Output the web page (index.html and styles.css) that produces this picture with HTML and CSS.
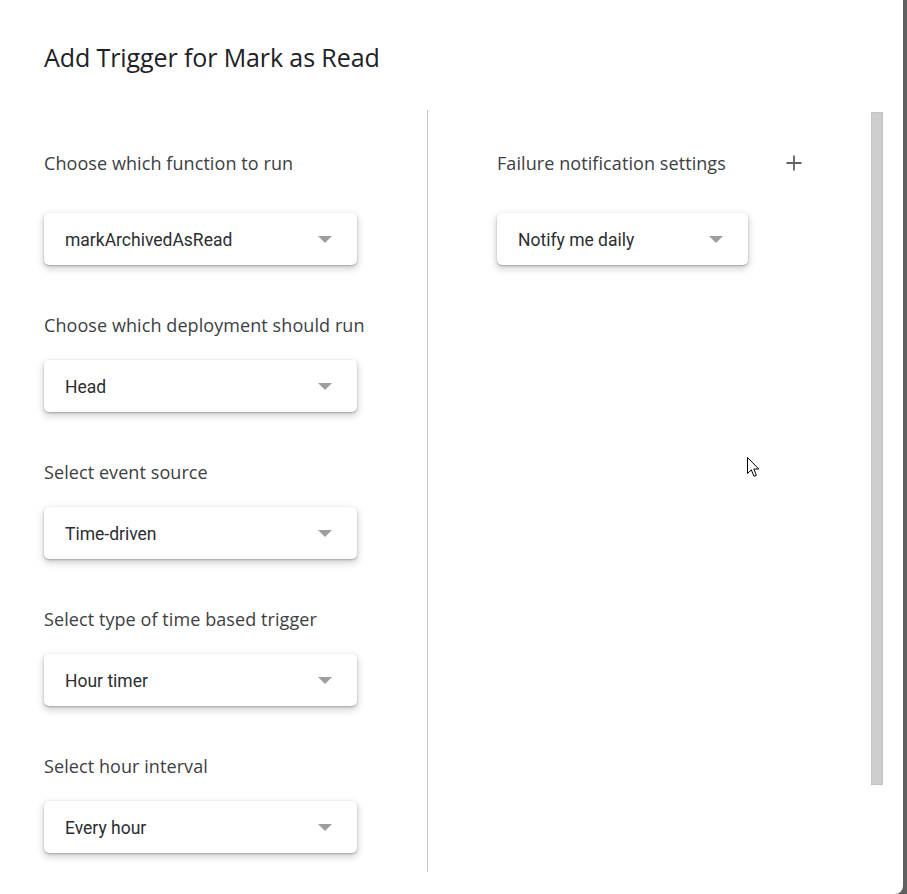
FILE: index.html
```html
<!DOCTYPE html>
<html>
<head>
<meta charset="utf-8">
<link rel="stylesheet" href="styles.css">
</head>
<body>
<div class="dialog">
  <h1 class="title">Add Trigger for Mark as Read</h1>
  <div class="body">
    <div class="col left">
      <div class="field first">
        <div class="label">Choose which function to run</div>
        <div class="select"><span class="value">markArchivedAsRead</span><svg class="arrow" width="14" height="7" viewBox="0 0 14 7"><polygon points="0,0 14,0 7,7" fill="#9e9e9e"/></svg></div>
      </div>
      <div class="field">
        <div class="label">Choose which deployment should run</div>
        <div class="select"><span class="value">Head</span><svg class="arrow" width="14" height="7" viewBox="0 0 14 7"><polygon points="0,0 14,0 7,7" fill="#9e9e9e"/></svg></div>
      </div>
      <div class="field">
        <div class="label">Select event source</div>
        <div class="select"><span class="value">Time-driven</span><svg class="arrow" width="14" height="7" viewBox="0 0 14 7"><polygon points="0,0 14,0 7,7" fill="#9e9e9e"/></svg></div>
      </div>
      <div class="field">
        <div class="label">Select type of time based trigger</div>
        <div class="select"><span class="value">Hour timer</span><svg class="arrow" width="14" height="7" viewBox="0 0 14 7"><polygon points="0,0 14,0 7,7" fill="#9e9e9e"/></svg></div>
      </div>
      <div class="field">
        <div class="label">Select hour interval</div>
        <div class="select"><span class="value">Every hour</span><svg class="arrow" width="14" height="7" viewBox="0 0 14 7"><polygon points="0,0 14,0 7,7" fill="#9e9e9e"/></svg></div>
      </div>
    </div>
    <div class="divider"></div>
    <div class="col right">
      <div class="field first">
        <div class="label-row">
          <span class="row-text">Failure notification settings</span>
          <svg class="plus" width="16" height="16" viewBox="0 0 16 16"><path d="M8 0.5v15M0.5 8h15" stroke="#5f6368" stroke-width="1.8" fill="none"/></svg>
        </div>
        <div class="select narrow"><span class="value">Notify me daily</span><svg class="arrow" width="14" height="7" viewBox="0 0 14 7"><polygon points="0,0 14,0 7,7" fill="#9e9e9e"/></svg></div>
      </div>
    </div>
    <div class="scroll"><div class="thumb"></div></div>
  </div>
  <svg class="cursor" width="14" height="21" viewBox="0 0 14 21"><path d="M0.5 0.5 L0.5 16.5 L4.3 12.9 L7 19.3 L9.4 18.3 L6.8 12 L11.8 12 Z" fill="#fff" stroke="#000" stroke-width="1" stroke-linejoin="miter"/></svg>
</div>
</body>
</html>
```

FILE: styles.css
```css
html, body {
  margin: 0;
  padding: 0;
}
body {
  background: #5f5f5f;
  width: 907px;
  height: 894px;
  overflow: hidden;
}
.dialog {
  position: relative;
  width: 903px;
  height: 894px;
  background: #fff;
  border-bottom-right-radius: 8px;
  box-sizing: border-box;
}
.title {
  margin: 0;
  padding: 41px 0 0 44px;
  font-family: "Open Sans", sans-serif;
  font-weight: 400;
  font-size: 25px;
  line-height: 32px;
  color: #202124;
  letter-spacing: -0.1px;
}
.body {
  display: flex;
  margin-top: 37px;
  height: 762px;
  padding-left: 44px;
}
.col.left {
  width: 383px;
  padding-top: 41px;
  box-sizing: border-box;
}
.col.right {
  flex: 1;
  padding-top: 41px;
  padding-left: 69px;
}
.divider {
  width: 1px;
  background: #c8c8c8;
  height: 762px;
}
.field {
  margin-top: 48px;
}
.field.first {
  margin-top: 0;
}
.label, .row-text {
  font-family: "Open Sans", sans-serif;
  font-size: 18px;
  line-height: 24px;
  color: #3c4043;
  letter-spacing: 0.08px;
}
.label {
  margin-bottom: 23px;
}
.field.first .label {
  margin-bottom: 38px;
}
.label-row {
  display: flex;
  justify-content: space-between;
  align-items: center;
  width: 305px;
  height: 24px;
  margin-bottom: 38px;
}
.plus {
  display: block;
}
.select {
  width: 313px;
  height: 52px;
  box-sizing: border-box;
  border-radius: 5px;
  background: #fff;
  box-shadow: 0 1px 2px rgba(0,0,0,0.25), 0 3px 7px 1px rgba(0,0,0,0.18);
  display: flex;
  align-items: center;
  justify-content: space-between;
  padding: 0 25px 0 21px;
}
.select.narrow {
  width: 251px;
}
.value {
  font-family: Roboto, sans-serif;
  font-size: 17.5px;
  color: #2b2e31;
  padding-top: 2px;
}
.arrow {
  display: block;
  margin-top: 1px;
}
.scroll {
  width: 12px;
  margin-right: 20px;
  padding-top: 2px;
}
.thumb {
  width: 12px;
  height: 673px;
  background: #cdcdcd;
  box-sizing: border-box;
  border: 1px solid #c2c2c2;
}
.cursor {
  position: absolute;
  left: 747px;
  top: 457px;
}
```
